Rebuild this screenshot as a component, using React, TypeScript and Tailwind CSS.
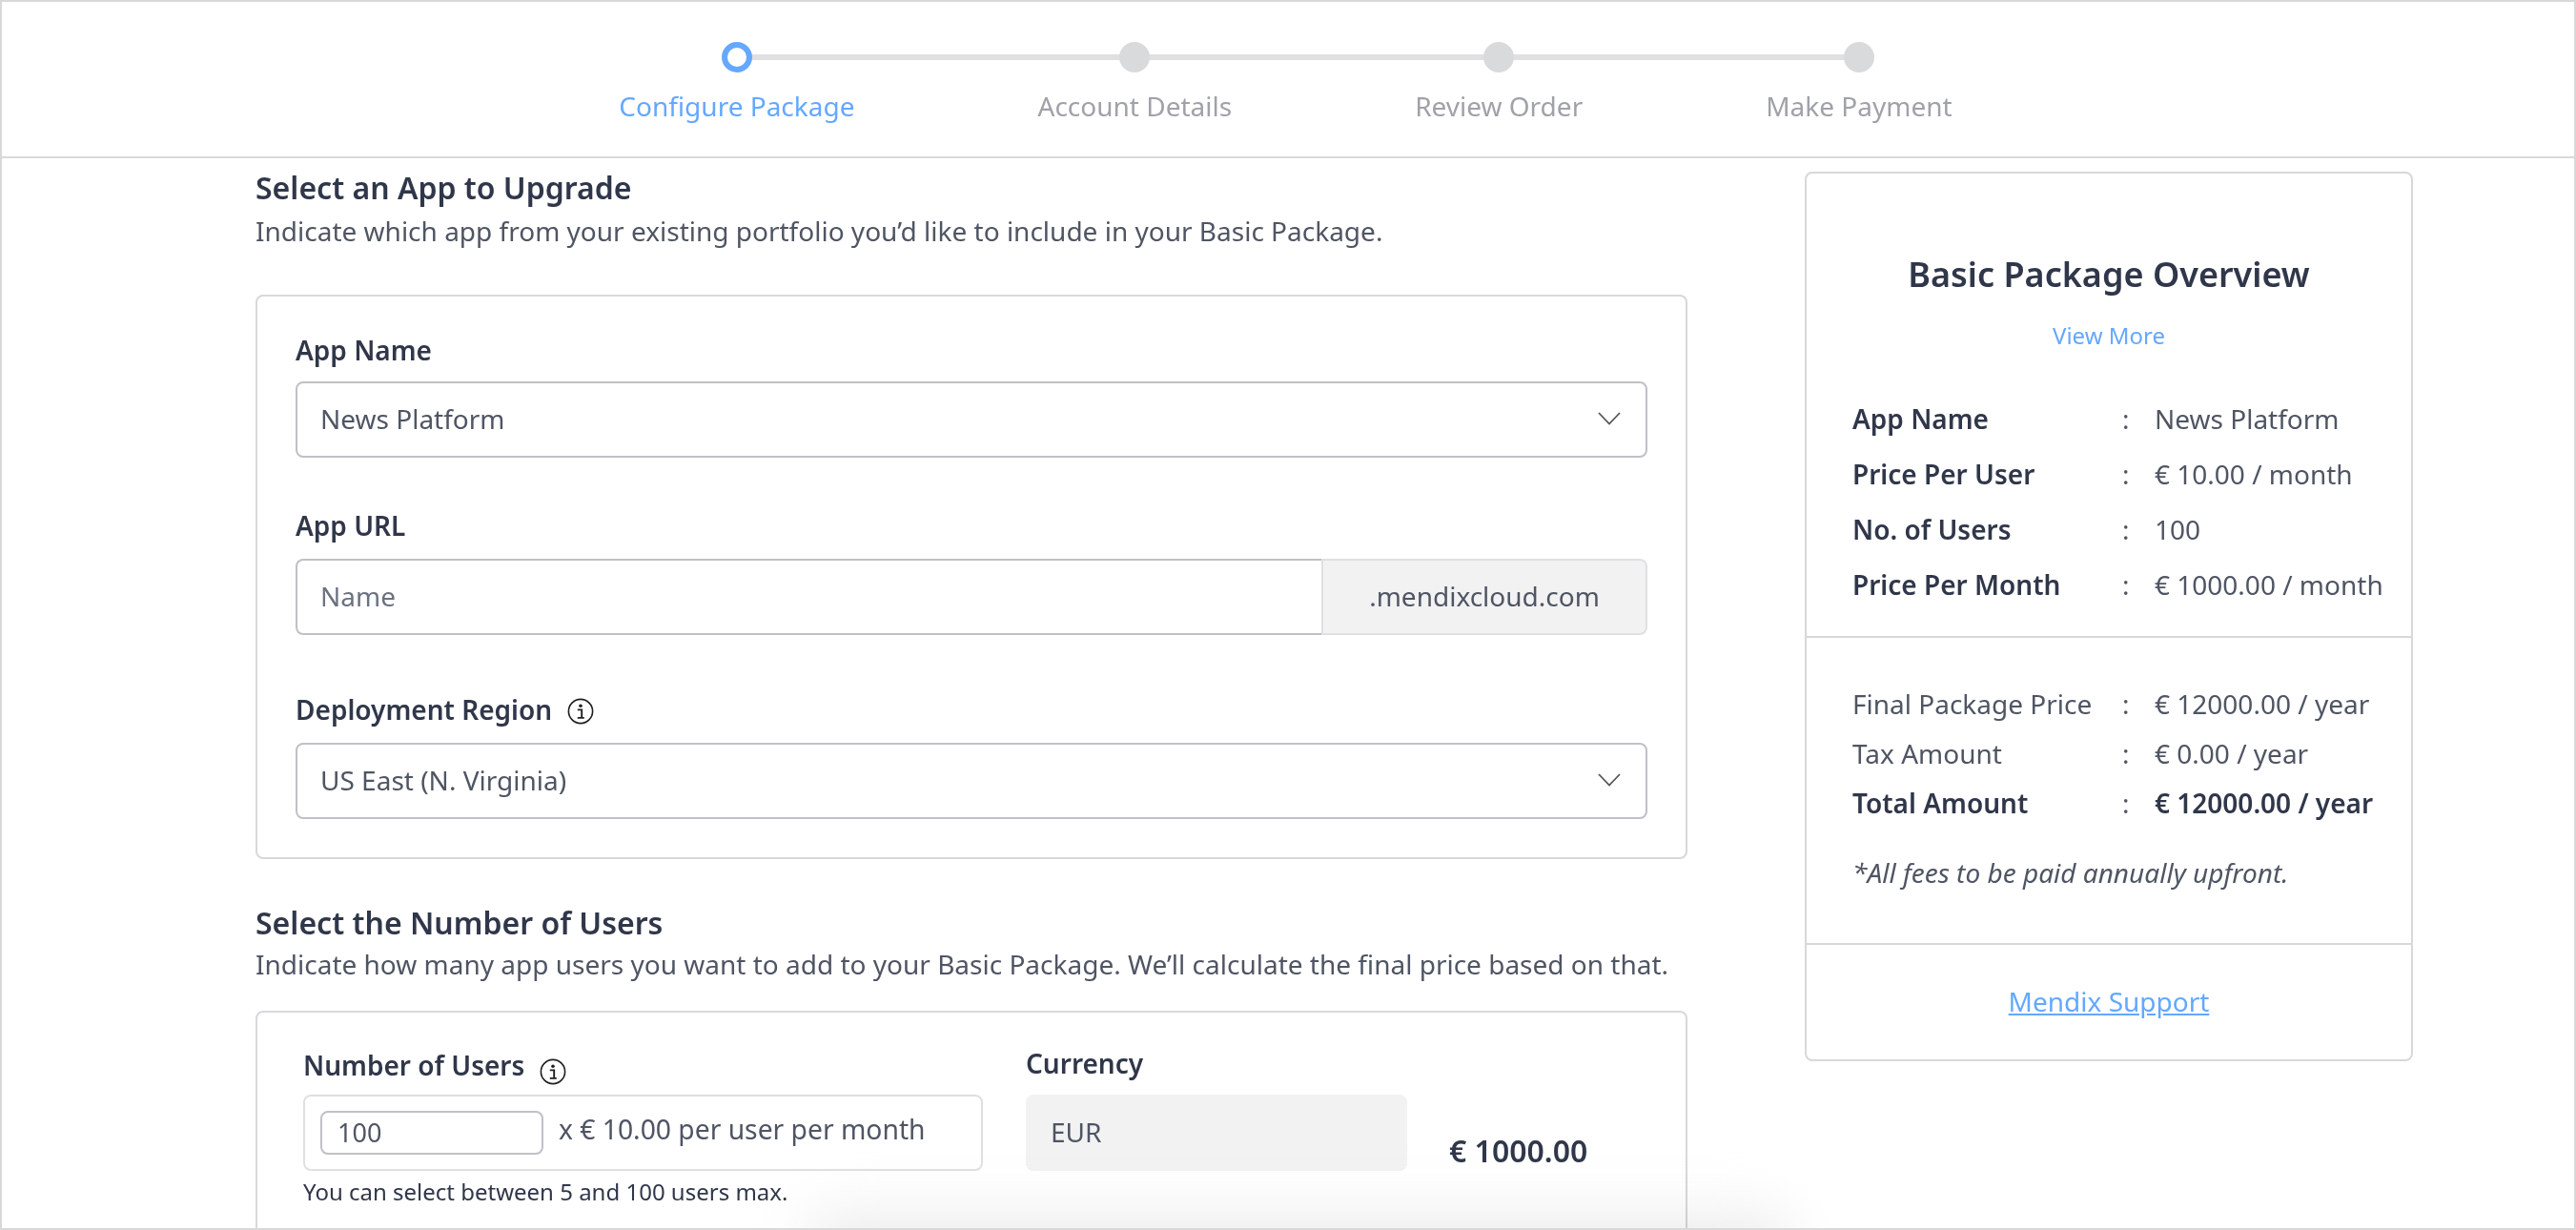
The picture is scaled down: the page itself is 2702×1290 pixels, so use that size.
import React from 'react';

const steps = [
  { label: 'Configure Package', active: true, line: 'w-[418px]' },
  { label: 'Account Details', active: false, line: 'w-[382px]' },
  { label: 'Review Order', active: false, line: 'w-[377px]' },
  { label: 'Make Payment', active: false, line: '' },
];

const InfoIcon = () => (
  <svg width="28" height="28" viewBox="0 0 28 28" fill="none" className="shrink-0">
    <circle cx="14" cy="14" r="12.6" stroke="#1f1f1f" strokeWidth="1.6" />
    <circle cx="14" cy="8.2" r="1.8" fill="#1f1f1f" />
    <path d="M10.8 12.4h4.4v8M10.8 20.9h7" stroke="#1f1f1f" strokeWidth="1.9" />
  </svg>
);

const Chevron = () => (
  <svg width="24" height="14" viewBox="0 0 24 14" fill="none" className="mb-[3px] shrink-0">
    <path d="M1 1l11 11.5L23 1" stroke="#555" strokeWidth="1.8" />
  </svg>
);

const SelectBox = ({ value }: { value: string }) => (
  <div className="flex h-[80px] items-center justify-between rounded-lg border-2 border-[#c0c0c7] pl-[24px] pr-[26px] text-[28px] text-[#4f5563]">
    <span className="pb-[2px]">{value}</span>
    <Chevron />
  </div>
);

const Row = ({ label, value, labelBold, valueBold, className }: { label: string; value: string; labelBold?: boolean; valueBold?: boolean; className: string }) => (
  <div className={`flex items-center pb-[2px] text-[28px] ${className}`}>
    <span className={`w-[283px] ${labelBold ? 'font-semibold text-[#30374a]' : 'text-[#4f5563]'}`}>{label}</span>
    <span className="w-[34px] text-[#4f5563]">:</span>
    <span className={`whitespace-nowrap ${valueBold ? 'font-semibold text-[#30374a]' : 'text-[#4f5563]'}`}>{value}</span>
  </div>
);

export default function App() {
  return (
    <div className="relative h-[1290px] w-[2702px] overflow-hidden border-2 border-[#d8d8d8] bg-white font-['Noto_Sans',sans-serif]">
      <div className="flex h-[164px] justify-center gap-[192px] border-b-2 border-[#d8d8d8] pr-[5px] pt-[42px]">
        {steps.map((s) => (
          <div key={s.label} className="relative flex flex-col items-center">
            {s.line && <div className={`absolute left-1/2 top-[13px] h-[6px] bg-[#e0e0e2] ${s.line}`} />}
            <div className={`relative z-10 h-[32px] w-[32px] rounded-full ${s.active ? 'border-[6px] border-[#64a8ff] bg-white' : 'bg-[#d9dadc]'}`} />
            <span className={`mt-[16px] whitespace-nowrap text-[28px] leading-[38px] ${s.active ? 'text-[#64a8ff]' : 'text-[#a0a2a8]'}`}>{s.label}</span>
          </div>
        ))}
      </div>

      <div className="flex pl-[266px]">
        <div className="w-[1502px] pt-[9px]">
          <h2 className="text-[32px] font-semibold leading-[44px] text-[#30374a]">Select an App to Upgrade</h2>
          <p className="mt-[4px] text-[28px] leading-[38px] text-[#4f5563]">Indicate which app from your existing portfolio you’d like to include in your Basic Package.</p>

          <div className="mt-[48px] h-[592px] rounded-lg border-2 border-[#d8d8dc] px-[40px] pt-[34px]">
            <label className="block text-[28px] font-semibold leading-[44px] text-[#30374a]">App Name</label>
            <div className="mt-[11px]"><SelectBox value="News Platform" /></div>

            <label className="mt-[49px] block text-[28px] font-semibold leading-[44px] text-[#30374a]">App URL</label>
            <div className="mt-[13px] flex h-[80px]">
              <div className="flex flex-1 items-center rounded-l-lg border-2 border-r-0 border-[#c0c0c7] pb-[2px] pl-[24px] text-[28px] text-[#6b7280]">Name</div>
              <div className="flex w-[342px] items-center justify-center rounded-r-lg border-2 border-[#e0e0e2] bg-[#f2f2f3] pb-[2px] text-[28px] text-[#4f5563]">.mendixcloud.com</div>
            </div>

            <div className="mt-[56px] flex items-center gap-[16px]">
              <label className="text-[28px] font-semibold leading-[44px] text-[#30374a]">Deployment Region</label>
              <div className="mt-[3px]"><InfoIcon /></div>
            </div>
            <div className="mt-[13px]"><SelectBox value="US East (N. Virginia)" /></div>
          </div>

          <h2 className="mt-[45px] text-[32px] font-semibold leading-[44px] text-[#30374a]">Select the Number of Users</h2>
          <p className="mt-[2px] text-[28px] leading-[38px] text-[#4f5563]">Indicate how many app users you want to add to your Basic Package. We’ll calculate the final price based on that.</p>

          <div className="mt-[30px] flex h-[300px] rounded-lg border-2 border-[#d8d8dc] pl-[48px] pt-[33px]">
            <div className="w-[713px]">
              <div className="flex h-[44px] items-center gap-[16px]">
                <label className="text-[28px] font-semibold text-[#30374a]">Number of Users</label>
                <div className="mt-[14px]"><InfoIcon /></div>
              </div>
              <div className="mt-[9px] flex h-[80px] items-center rounded-lg border-2 border-[#e0e0e2] pl-[16px]">
                <div className="flex h-[46px] w-[234px] items-center rounded-lg border-2 border-[#c0c0c7] pl-[16px] text-[27px] text-[#4f5563]">100</div>
                <span className="mb-[8px] ml-[16px] text-[28.25px] text-[#4f5563]">x € 10.00 per user per month</span>
              </div>
              <p className="mt-[6px] text-[24px] leading-[32px] text-[#30374a]">You can select between 5 and 100 users max.</p>
            </div>
            <div className="ml-[45px] w-[400px]">
              <label className="-mt-[1px] flex h-[44px] items-center pb-[2px] text-[28px] font-semibold text-[#30374a]">Currency</label>
              <div className="mt-[10px] flex h-[80px] items-center rounded-lg bg-[#f2f2f3] pb-[2px] pl-[26px] text-[28px] text-[#4f5563]">EUR</div>
            </div>
            <div className="ml-[44px] pt-[90px] text-[32px] font-semibold leading-[44px] text-[#30374a]">€ 1000.00</div>
          </div>
        </div>

        <div className="ml-[123px] mt-[14px] h-[933px] w-[638px] rounded-lg border-2 border-[#d8d8dc]">
          <div className="h-[487px] border-b-2 border-[#d8d8dc] pl-[48px]">
            <h3 className="-ml-[48px] pt-[83px] text-center text-[36px] font-semibold leading-[46px] text-[#30374a]">Basic Package Overview</h3>
            <div className="-ml-[48px] mt-[25px] text-center text-[24px] leading-[32px] text-[#64a8ff]">View More</div>
            <Row label="App Name" value="News Platform" labelBold className="mt-[43px] h-[58px]" />
            <Row label="Price Per User" value="€ 10.00 / month" labelBold className="h-[58px]" />
            <Row label="No. of Users" value="100" labelBold className="h-[58px]" />
            <Row label="Price Per Month" value="€ 1000.00 / month" labelBold className="h-[58px]" />
          </div>
          <div className="h-[322px] border-b-2 border-[#d8d8dc] pl-[48px] pt-[44px]">
            <Row label="Final Package Price" value="€ 12000.00 / year" className="h-[52px]" />
            <Row label="Tax Amount" value="€ 0.00 / year" className="h-[52px]" />
            <Row label="Total Amount" value="€ 12000.00 / year" labelBold valueBold className="h-[52px]" />
            <p className="mt-[27px] text-[28px] italic leading-[38px] text-[#4f5563]">*All fees to be paid annually upfront.</p>
          </div>
          <div className="pt-[40px] text-center text-[28px] leading-[38px] text-[#64a8ff] underline">Mendix Support</div>
        </div>
      </div>

      <div className="absolute bottom-[-76px] left-[850px] h-[90px] w-[1020px] rounded-lg bg-[#ececec] mix-blend-multiply blur-[30px]" />
    </div>
  );
}
